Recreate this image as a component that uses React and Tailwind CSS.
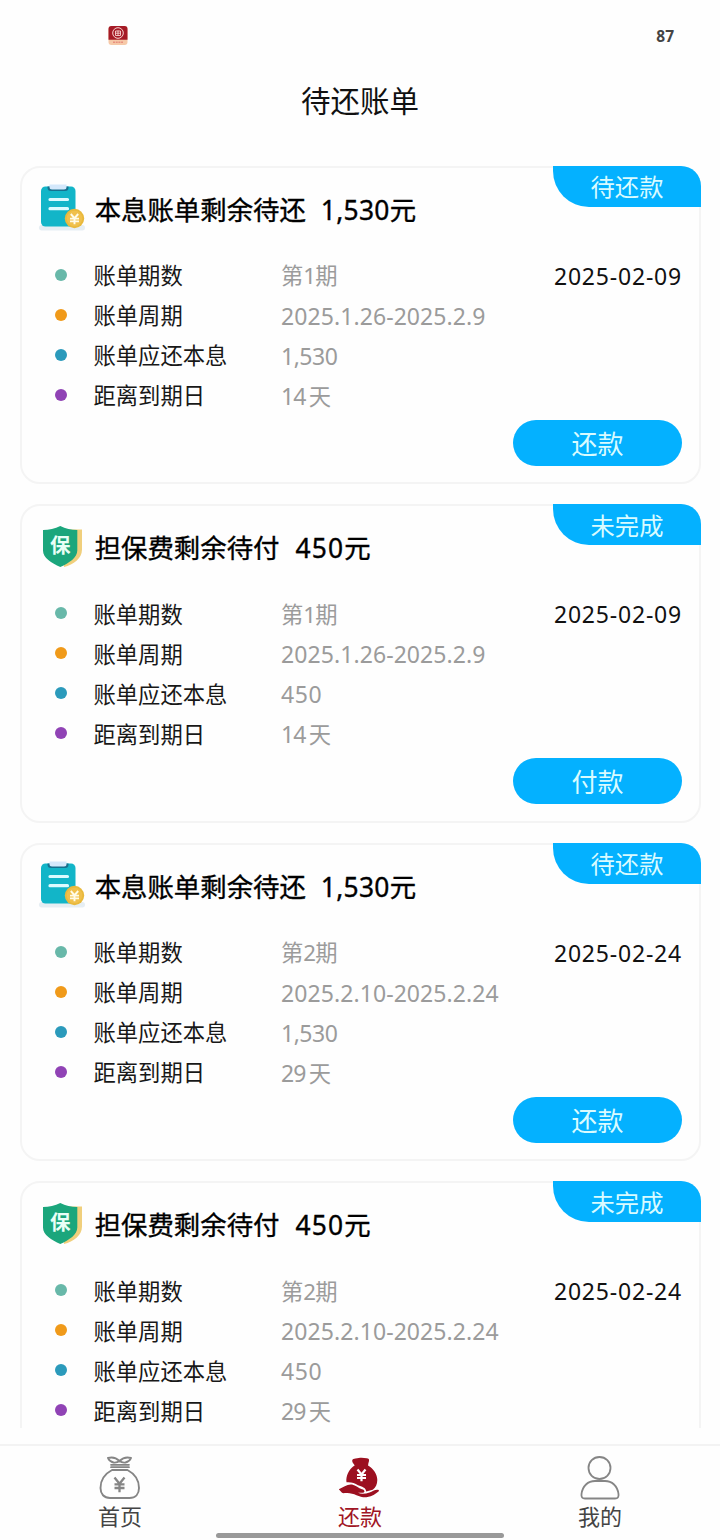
const bills = [
  {
    type: "loan",
    title: "本息账单剩余待还",
    amount: "1,530",
    status: "待还款",
    term: "1",
    period: "2025.1.26-2025.2.9",
    days: "14",
    date: "2025-02-09",
    action: "还款",
  },
  {
    type: "guarantee",
    title: "担保费剩余待付",
    amount: "450",
    status: "未完成",
    term: "1",
    period: "2025.1.26-2025.2.9",
    days: "14",
    date: "2025-02-09",
    action: "付款",
  },
  {
    type: "loan",
    title: "本息账单剩余待还",
    amount: "1,530",
    status: "待还款",
    term: "2",
    period: "2025.2.10-2025.2.24",
    days: "29",
    date: "2025-02-24",
    action: "还款",
  },
  {
    type: "guarantee",
    title: "担保费剩余待付",
    amount: "450",
    status: "未完成",
    term: "2",
    period: "2025.2.10-2025.2.24",
    days: "29",
    date: "2025-02-24",
  },
];

const LoanIcon = () => (
  <svg width="48" height="50" viewBox="0 0 48 50" className="shrink-0">
    <rect x="1" y="41" width="46" height="5.500" rx="2.700" fill="#e6eef3" />
    <rect x="3" y="2.500" width="34.500" height="40" rx="4.500" fill="#12b5c8" />
    <path d="M9.500 2.500h21v1a3.500 3.500 0 0 1-3.500 3.500H13a3.500 3.500 0 0 1-3.500-3.500z" fill="#17708f" />
    <path d="M11.500 0.500h17v2.500a2.500 2.500 0 0 1-2.500 2.500h-12a2.500 2.500 0 0 1-2.500-2.500z" fill="#d4e8fb" />
    <path d="M12 15.500h17.500M12 24.700h17.500" stroke="#dcfbff" strokeWidth="3.200" strokeLinecap="round" />
    <circle cx="36.500" cy="34.500" r="9.700" fill="#e9b93c" />
    <circle cx="36.500" cy="34.500" r="7.800" fill="#f0c04c" />
    <path
      d="M32.800 30l3.700 4.200 3.700-4.200M32 34.600h9M32 37.400h9M36.500 34.200v6"
      fill="none"
      stroke="#fffbe8"
      strokeWidth="1.900"
    />
  </svg>
);

const ShieldIcon = () => (
  <svg width="48" height="50" viewBox="0 -2 48 50" className="shrink-0">
    <path d="M24 4.500h20v20c0 9-8.500 15-18 17.500z" fill="#f0cf7c" />
    <path d="M22.300 1c5 2.800 11 4 17 4v20.500c0 7-8 12.500-17 16.500C13.500 38 5 33 5 25.500V5c6 0 12-1.200 17.300-4z" fill="#1ba67c" />
    <text x="22.300" y="27.500" fontSize="20.500" fontWeight="700" textAnchor="middle" fill="#e9fff7">
      保
    </text>
  </svg>
);

const Row = ({ dot, label, children }) => (
  <div className="flex h-10 items-center">
    <span className={`relative -top-px ml-[32.5px] h-3 w-3 shrink-0 rounded-full ${dot}`} />
    <span className="ml-[27px] w-[187.5px] shrink-0 pt-[0.5px] text-[22.3px] text-[#181818]">{label}</span>
    <span className="pt-[0.5px] text-[22.3px] text-[#9b9b9b]">{children}</span>
  </div>
);

const BillCard = ({ bill }) => {
  const isLoan = bill.type === "loan";

  return (
    <section className="relative h-[318.5px] w-[681px] shrink-0 rounded-[20px] border-2 border-[#f4f4f4]">
      {/* Status ribbon */}
      <div className="absolute -top-0.5 -right-0.5 flex h-[41px] w-[148px] items-center justify-center rounded-tr-[20px] rounded-bl-[36px] bg-[#04b1ff] pt-0.5 text-[24.3px] leading-none text-[#d9fbff]">
        {bill.status}
      </div>

      {/* Header */}
      <div className="flex h-[88px] items-center pb-[5px] pl-[15.7px]">
        {isLoan ? <LoanIcon /> : <ShieldIcon />}
        <h2 className="ml-[9px] flex items-center pt-[2.5px] text-[26.4px] text-black [-webkit-text-stroke:0.35px_#000]">
          {bill.title}
          <span className={isLoan ? "ml-[15px] tracking-[0.3px]" : "ml-[16px] tracking-[1.2px]"}>{bill.amount}</span>元
        </h2>
      </div>

      {/* Details */}
      <div className="relative">
        <Row dot="bg-[#68b8a9]" label="账单期数">
          第<span className="-tracking-[0.8px]">{bill.term}</span>期
        </Row>
        <Row dot="bg-[#f09a1a]" label="账单周期">
          <span className="text-[23px] tracking-[0.08px]">{bill.period}</span>
        </Row>
        <Row dot="bg-[#2b9abb]" label="账单应还本息">
          <span className={isLoan ? "text-[23px] -tracking-[0.5px]" : "text-[23px] tracking-[0.6px]"}>{bill.amount}</span>
        </Row>
        <Row dot="bg-[#9043b5]" label="距离到期日">
          <span className="text-[23px] -tracking-[0.8px]">{bill.days}</span>
          <span className="ml-[3px]">天</span>
        </Row>
        <span className="absolute top-0 right-[17px] flex h-10 items-center pt-[0.5px] text-[23px] tracking-[0.8px] text-[#111]">
          {bill.date}
        </span>
      </div>

      {/* Action */}
      {bill.action && (
        <button className="mt-1 ml-[491px] flex h-[46px] w-[169px] items-center justify-center rounded-full bg-[#04b1ff] pt-0.5 text-[26px] leading-none text-[#d9fbff]">
          {bill.action}
        </button>
      )}
    </section>
  );
};

const HomeIcon = () => (
  <svg width="44" height="46" viewBox="0 0 44 46" fill="none" stroke="#858585" strokeWidth="1.900" strokeLinecap="round" strokeLinejoin="round">
    <path d="M15.500 6.500C13 6 11 4.500 10 2c4.500-1.300 8-.5 11.500 3C25 1.500 28.500.7 33 2c-1 2.500-3 4-5.500 4.500M15.500 6.500c2.300.3 4.200-.1 6-1.500 1.800 1.400 3.700 1.800 6 1.500" />
    <path d="M13 8.800h18M13 11.200h18" strokeWidth="1.700" />
    <path d="M14 14h15.500C37 18 41 25 41 32c0 6-3.500 10-9.500 10H12c-6 0-9.500-4-9.500-10C2.500 25 6.500 18 14 14z" />
    <path d="M16.500 21.500l5 6.300 5-6.300M16.500 28.300h10M16.500 32h10M21.500 27.800v8.400" strokeWidth="2.300" strokeLinecap="butt" />
  </svg>
);

const RepayIcon = () => (
  <svg width="44" height="46" viewBox="0 0 44 46" fill="#9c1020">
    <path d="M17 10c-1-2-3-3.500-2.800-5.500.3-1.500 1.800-1.800 3.300-2 2.500-.3 4-.8 6-.8 1.800 0 3.500.5 5.200.6 2 .2 2.600 1 2.300 2.700C30.500 6.800 30 8.500 30 10z" />
    <path d="M16.500 9.500H30c5.500 3.200 9.300 8.800 9.300 14.500 0 4.200-1.700 8-4.600 9.800l-6.500 1.600c-.4-4.400-4.200-4.400-8.200-6.200-3.300-2-6.500-3.300-11.500-2.900C7.500 20.500 11 13 16.500 9.500z" />
    <path d="M.8 33.300c4.500-2.300 8.700-5.500 13.200-4.800 4 .7 6.500 4 10 4.700 3 .6 3.500 3.600.3 3.600l-4.300-.1c3.500 1.600 7.500 1 11.500-.3 3-1 5-3 8.500-2.700 1 .1 1.200 1 .5 1.700-3 2.500-6.500 4.800-11 5.700-7.500 1.300-13.500-4.800-21.500-4.100-2 .2-3.200.3-4-.2z" />
    <path d="M19.500 13.500l4 5 4-5M19 19h9M19 22h9M23.500 18.500v6.800" fill="none" stroke="#fff" strokeWidth="2.200" />
  </svg>
);

const ProfileIcon = () => (
  <svg width="44" height="46" viewBox="0 0 44 46" fill="none" stroke="#858585" strokeWidth="1.800">
    <circle cx="21.500" cy="12" r="11" />
    <path d="M17 25h10c7 0 12.500 5 13.500 13 .4 3.300-.8 4.500-3.500 4.500H7c-2.700 0-3.900-1.200-3.500-4.500 1-8 6.500-13 13.500-13z" />
  </svg>
);

const tabs = [
  { label: "首页", Icon: HomeIcon, color: "text-[#444]" },
  { label: "还款", Icon: RepayIcon, color: "text-[#a01525]" },
  { label: "我的", Icon: ProfileIcon, color: "text-[#444]" },
];

const AppBadge = () => (
  <svg width="20" height="20" viewBox="0 0 20 20">
    <rect x="0.500" width="19" height="19" rx="3" fill="#f6c9a8" />
    <path d="M.5 13.800V3a3 3 0 0 1 3-3h13a3 3 0 0 1 3 3v10.800z" fill="#a51a26" />
    <circle cx="10" cy="7" r="5.300" fill="none" stroke="#f8d5d2" strokeWidth="1" />
    <path d="M7.500 5h5v4.500h-5zM7.500 7.200h5M10 4.500v5" fill="none" stroke="#f8d5d2" strokeWidth=".9" />
    <path d="M5 16.300h10" stroke="#e89080" strokeWidth="1.400" strokeDasharray="2 .7" />
  </svg>
);

export default function App() {
  return (
    <div className="flex h-[1540px] w-[720px] flex-col overflow-hidden bg-[#fefefe] font-['Noto_Sans','Noto_Sans_CJK_SC',sans-serif]">
      {/* Status bar */}
      <div className="flex h-[70px] shrink-0 items-center justify-between pt-[1px] pr-[46px] pl-[108px]">
        <AppBadge />
        <span className="pt-0.5 text-[15.5px] font-bold text-[#444]">87</span>
      </div>

      <h1 className="flex h-[60px] shrink-0 items-center justify-center pt-0.5 text-[29.5px] text-[#111]">待还账单</h1>

      {/* Bill list */}
      <main className="mt-[35.75px] flex h-[1262.25px] shrink-0 flex-col gap-5 overflow-hidden pl-5">
        {bills.map((bill, index) => (
          <BillCard key={index} bill={bill} />
        ))}
      </main>

      {/* Bottom tabs */}
      <nav className="relative mt-4 grid h-24 shrink-0 grid-cols-3 border-t-2 border-[#f3f3f3]">
        {tabs.map(({ label, Icon, color }) => (
          <div key={label} className="flex flex-col items-center pt-2.5">
            <Icon />
            <span className={`mt-px text-[22px] leading-[26px] ${color}`}>{label}</span>
          </div>
        ))}
        <div className="absolute bottom-[2px] left-[216px] h-[5px] w-72 rounded-full bg-[#999]" />
      </nav>
    </div>
  );
}
